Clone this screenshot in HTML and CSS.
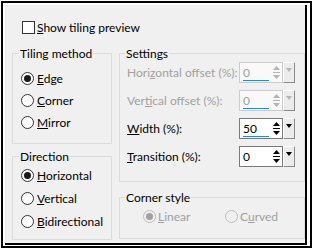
FILE: index.html
```html
<!DOCTYPE html>
<html lang="en">
<head>
  <meta charset="UTF-8">
  <title>Tiling</title>
  <link rel="stylesheet" href="styles.css">
</head>
<body>

  <div class="window">
    <div class="panel">

      <label class="check-row">
        <span class="checkbox"></span>
        <span><u>S</u>how tiling preview</span>
      </label>

      <div class="cols">
        <div class="col col-left">
          <fieldset class="group group-tiling">
            <legend>Tiling method</legend>
            <div class="option"><span class="radio on"></span><span><u>E</u>dge</span></div>
            <div class="option"><span class="radio"></span><span><u>C</u>orner</span></div>
            <div class="option"><span class="radio"></span><span><u>M</u>irror</span></div>
          </fieldset>

          <fieldset class="group group-direction">
            <legend>Direction</legend>
            <div class="option"><span class="radio on"></span><span><u>H</u>orizontal</span></div>
            <div class="option"><span class="radio"></span><span><u>V</u>ertical</span></div>
            <div class="option"><span class="radio"></span><span><u>B</u>idirectional</span></div>
          </fieldset>
        </div>

        <div class="col col-right">
          <fieldset class="group group-settings">
            <legend>Settings</legend>
            <div class="rows">
              <div class="row disabled">
                <span>Hori<u>z</u>ontal offset (%):</span>
                <div class="spin">
                  <div class="field">
                    <div class="value"><span>0</span><span class="bar"></span></div>
                    <svg class="arrows" width="9" height="17" viewBox="0 0 9 17"><path d="M4.5 2 L8 6 H1 Z"/><rect x="1" y="8" width="7" height="1"/><path d="M1 11 H8 L4.5 15 Z"/></svg>
                  </div>
                  <div class="drop"><svg width="8" height="6" viewBox="0 0 8 6"><path d="M1 1 H7 L4 5 Z"/></svg></div>
                </div>
              </div>
              <div class="row disabled">
                <span>Ver<u>t</u>ical offset (%):</span>
                <div class="spin">
                  <div class="field">
                    <div class="value"><span>0</span><span class="bar"></span></div>
                    <svg class="arrows" width="9" height="17" viewBox="0 0 9 17"><path d="M4.5 2 L8 6 H1 Z"/><rect x="1" y="8" width="7" height="1"/><path d="M1 11 H8 L4.5 15 Z"/></svg>
                  </div>
                  <div class="drop"><svg width="8" height="6" viewBox="0 0 8 6"><path d="M1 1 H7 L4 5 Z"/></svg></div>
                </div>
              </div>
              <div class="row">
                <span><u>W</u>idth (%):</span>
                <div class="spin">
                  <div class="field">
                    <div class="value"><span>50</span><span class="bar"></span></div>
                    <svg class="arrows" width="9" height="17" viewBox="0 0 9 17"><path d="M4.5 2 L8 6 H1 Z"/><rect x="1" y="8" width="7" height="1"/><path d="M1 11 H8 L4.5 15 Z"/></svg>
                  </div>
                  <div class="drop"><svg width="8" height="6" viewBox="0 0 8 6"><path d="M1 1 H7 L4 5 Z"/></svg></div>
                </div>
              </div>
              <div class="row">
                <span><u>T</u>ransition (%):</span>
                <div class="spin">
                  <div class="field">
                    <div class="value"><span>0</span></div>
                    <svg class="arrows" width="9" height="17" viewBox="0 0 9 17"><path d="M4.5 2 L8 6 H1 Z"/><rect x="1" y="8" width="7" height="1"/><path d="M1 11 H8 L4.5 15 Z"/></svg>
                  </div>
                  <div class="drop"><svg width="8" height="6" viewBox="0 0 8 6"><path d="M1 1 H7 L4 5 Z"/></svg></div>
                </div>
              </div>
            </div>
          </fieldset>

          <fieldset class="group group-corner">
            <legend>Corner style</legend>
            <div class="corner-row">
              <div class="option disabled linear"><span class="radio on"></span><span><u>L</u>inear</span></div>
              <div class="option disabled"><span class="radio"></span><span>C<u>u</u>rved</span></div>
            </div>
          </fieldset>
        </div>
      </div>

    </div>
  </div>

</body>
</html>
```

FILE: styles.css
```css
* {
  box-sizing: border-box;
}

body {
  margin: 0;
  padding: 1px;
  background: #fff;
  font-family: Lato, 'Liberation Sans', sans-serif;
  font-size: 12px;
  color: #000;
}

u {
  text-underline-offset: 1px;
}

.window {
  width: 311px;
  height: 247px;
  border: 2px solid #000;
  padding: 2px 0 0 2px;
}

.panel {
  width: 302px;
  height: 240px;
  background: #f0f0f0;
  border-right: 2px solid #000;
  border-bottom: 2px solid #000;
  padding: 14px 0 0 7px;
}

.check-row {
  display: flex;
  align-items: center;
  gap: 2px;
  height: 17px;
  margin-left: 10px;
}

.checkbox {
  width: 13px;
  height: 13px;
  border: 1px solid #333;
  background: #fff;
}

.cols {
  display: flex;
  gap: 7px;
  margin-top: 11px;
}

.col {
  display: flex;
  flex-direction: column;
}

.col-left {
  width: 100px;
  gap: 6px;
}

.col-right {
  width: 186px;
  gap: 9px;
}

.group {
  margin: 0;
  min-width: 0;
  border: 1px solid #dcdcdc;
}

.group legend {
  padding: 0 1px;
  margin-left: -2px;
  line-height: 13px;
}

.group-tiling {
  padding: 7px 0 10px 8px;
}

.group-tiling .option {
  height: 22px;
}

.group-direction {
  padding: 1px 0 6px 8px;
}

.group-direction .option {
  height: 23px;
}

.option {
  display: flex;
  align-items: center;
  gap: 3px;
}

.radio {
  width: 13px;
  height: 13px;
  border: 1px solid #333;
  border-radius: 50%;
  background: #fff;
  display: flex;
  align-items: center;
  justify-content: center;
}

.radio.on::after {
  content: '';
  width: 7px;
  height: 7px;
  border-radius: 50%;
  background: #1a1a1a;
}

.group-settings {
  padding: 0 9px 11px 7px;
}

.rows {
  margin-top: -2px;
}

.row {
  display: flex;
  align-items: center;
  justify-content: space-between;
  height: 28px;
}

.spin {
  display: flex;
  width: 56px;
  height: 21px;
}

.field {
  width: 44px;
  display: flex;
  border: 1px solid #7a7a7a;
  background: #fff;
}

.value {
  flex: 1;
  display: flex;
  flex-direction: column;
  padding: 3px 0 1px 3px;
  line-height: 14px;
}

.bar {
  margin-top: auto;
  width: 26px;
  height: 2px;
  background: #2b87d6;
}

.arrows {
  margin: 1px 1px 0 0;
  fill: #000;
}

.drop {
  width: 12px;
  display: flex;
  justify-content: center;
  padding-top: 4px;
  border: 1px solid;
  border-color: #fff #8a8a8a #8a8a8a #fff;
  background: #ececec;
  fill: #000;
}

.row.disabled {
  color: #a0a0a0;
}

.row.disabled .field {
  border-color: #cccccc;
  background: #f9f9f9;
}

.row.disabled .arrows,
.row.disabled .drop {
  fill: #b4b4b4;
}

.group-corner {
  padding: 1px 0 11px 7px;
}

.corner-row {
  display: flex;
  height: 22px;
  margin-left: 16px;
}

.corner-row .option {
  gap: 2px;
}

.corner-row .linear {
  width: 82px;
}

.option.disabled {
  color: #a0a0a0;
}

.option.disabled .radio {
  border-color: #bcbcbc;
  background: #f0f0f0;
}

.option.disabled .radio.on::after {
  background: #a0a0a0;
}
```
